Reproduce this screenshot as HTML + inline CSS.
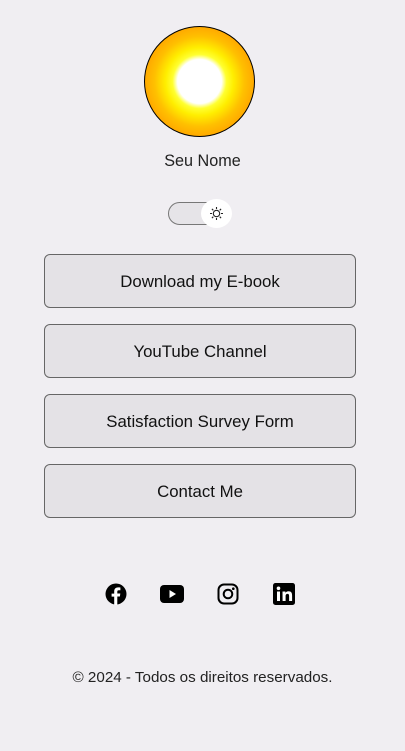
<!DOCTYPE html>
<html><head><meta charset="utf-8"><style>
body{margin:0;width:405px;height:751px;background:#f0eef2;font-family:"Liberation Sans",sans-serif;color:#222;position:relative;overflow:hidden}
.av{position:absolute;left:144px;top:26px;width:111px;height:111px;border-radius:50%;border:1.5px solid #000;box-sizing:border-box;background:radial-gradient(circle at 50% 50%,#fff 0,#fff 22px,#ffff30 27px,#ffee00 34px,#ffc000 45px,#ffa800 55px)}
.name{position:absolute;top:152px;width:100%;text-align:center;font-size:16.2px}
.tg{position:absolute;left:168px;top:202px;width:50px;height:23px;border:1px solid #777;border-radius:12px;background:#e6e4e8;box-sizing:border-box}
.knob{position:absolute;left:201px;top:199px;width:31px;height:29px;border-radius:50%;background:#fff}
.btn{position:absolute;left:44px;width:312px;height:54px;border:1px solid #666;border-radius:6px;box-sizing:border-box;background:#e4e2e6;text-align:center;line-height:54px;font-size:16.8px;color:#111}
.ic{position:absolute;top:583px}
.foot{position:absolute;top:669px;width:100%;text-align:center;font-size:15.2px;color:#222}
</style></head><body>
<div class="av"></div>
<div class="name">Seu Nome</div>
<div class="tg"></div>
<div class="knob"><svg width="31" height="29" viewBox="0 0 31 29"><g stroke="#222" stroke-width="1.1" fill="none"><circle cx="15.5" cy="14.5" r="3.2"/><path d="M15.5 8v2M15.5 19v2M9 14.5h2M20 14.5h2M10.9 9.9l1.4 1.4M18.7 17.7l1.4 1.4M10.9 19.1l1.4-1.4M18.7 11.3l1.4-1.4"/></g></svg></div>
<div class="btn" style="top:254px">Download my E-book</div>
<div class="btn" style="top:324px">YouTube Channel</div>
<div class="btn" style="top:394px">Satisfaction Survey Form</div>
<div class="btn" style="top:464px">Contact Me</div>
<svg class="ic" style="left:105px" width="22" height="22" viewBox="0 0 22 22"><circle cx="11" cy="11" r="10.5" fill="#000"/><path d="M12.3 22V13.5h2.6l.4-3h-3V8.7c0-.9.3-1.5 1.5-1.5h1.6V4.5c-.3 0-1.2-.1-2.3-.1-2.3 0-3.9 1.4-3.9 4v2.2H6.6v3h2.6V22z" fill="#fff"/></svg>
<svg class="ic" style="left:160px;top:585px" width="24" height="18" viewBox="0 0 24 18"><rect x="0" y="0" width="24" height="18" rx="4" fill="#000"/><path d="M9.5 5v8l6.5-4z" fill="#fff"/></svg>
<svg class="ic" style="left:217px" width="22" height="22" viewBox="0 0 22 22"><rect x="1.5" y="1.5" width="19" height="19" rx="5.5" fill="none" stroke="#000" stroke-width="2"/><circle cx="11" cy="11" r="4.3" fill="none" stroke="#000" stroke-width="2"/><circle cx="16.3" cy="5.7" r="1.3" fill="#000"/></svg>
<svg class="ic" style="left:273px" width="22" height="22" viewBox="0 0 22 22"><rect width="22" height="22" rx="2.5" fill="#000"/><rect x="4" y="8.5" width="3" height="9.5" fill="#fff"/><circle cx="5.5" cy="5.3" r="1.8" fill="#fff"/><path d="M9.5 8.5h2.9v1.4c.5-.9 1.6-1.7 3.2-1.7 3 0 3.5 2 3.5 4.5V18h-3v-4.6c0-1.1 0-2.5-1.6-2.5s-1.9 1.2-1.9 2.4V18h-3z" fill="#fff"/></svg>
<div class="foot">© 2024 - Todos os direitos reservados.</div>
</body></html>
